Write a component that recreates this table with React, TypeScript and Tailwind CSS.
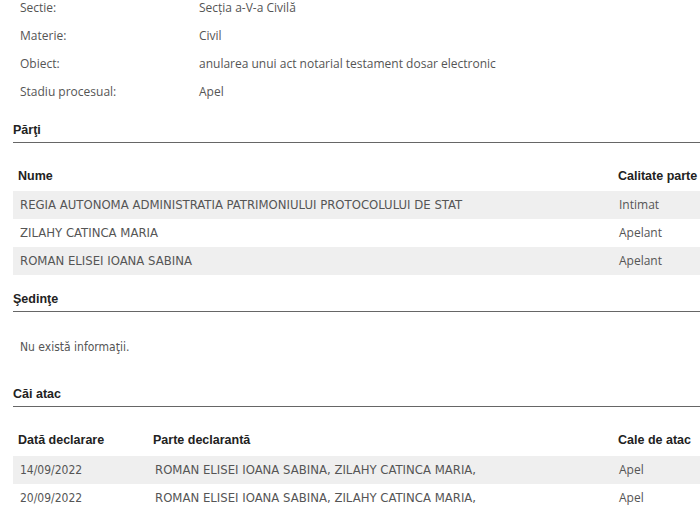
const info = [
  { label: 'Sectie:', value: 'Secția a-V-a Civilă' },
  { label: 'Materie:', value: 'Civil' },
  { label: 'Obiect:', value: 'anularea unui act notarial testament dosar electronic' },
  { label: 'Stadiu procesual:', value: 'Apel' },
];

const parti = [
  { nume: 'REGIA AUTONOMA ADMINISTRATIA PATRIMONIULUI PROTOCOLULUI DE STAT', calitate: 'Intimat' },
  { nume: 'ZILAHY CATINCA MARIA', calitate: 'Apelant' },
  { nume: 'ROMAN ELISEI IOANA SABINA', calitate: 'Apelant' },
];

const caiAtac = [
  { data: '14/09/2022', parte: 'ROMAN ELISEI IOANA SABINA, ZILAHY CATINCA MARIA,', cale: 'Apel' },
  { data: '20/09/2022', parte: 'ROMAN ELISEI IOANA SABINA, ZILAHY CATINCA MARIA,', cale: 'Apel' },
];

const tahoma = "font-['DejaVu_Sans_Condensed','Liberation_Sans',sans-serif]";
const segoe = "font-['Open_Sans','Noto_Sans',sans-serif]";
const arialBold = "font-['Liberation_Sans',Arial,sans-serif] font-bold text-[#222] text-[12.5px]";

function SectionTitle({ title }: { title: string }) {
  return <div className={`${arialBold} border-b border-[#666] pb-[3px] leading-[18px]`}>{title}</div>;
}

export default function App() {
  return (
    <div className="w-[700px] h-[513px] overflow-hidden bg-white pl-[13px]">
      <div className={`${segoe} text-[12px] text-[#555] -mt-[6px]`}>
        {info.map((row) => (
          <div key={row.label} className="flex h-[28px] items-center">
            <div className="w-[186px] pl-[7px]">{row.label}</div>
            <div>{row.value}</div>
          </div>
        ))}
      </div>

      <div className="mt-[15px]">
        <SectionTitle title="Părţi" />
      </div>
      <div className="mt-[19px]">
        <div className={`${arialBold} flex h-[29px] items-center`}>
          <div className="w-[600px] pl-[5px]">Nume</div>
          <div className="whitespace-nowrap pl-[5px]">Calitate parte</div>
        </div>
        {parti.map((p, idx) => (
          <div
            key={idx}
            className={`flex h-[28px] items-center text-[#555] ${idx % 2 === 0 ? 'bg-[#efefef]' : 'bg-white'}`}
          >
            <div className={`w-[600px] whitespace-nowrap pl-[7px] text-[13px] ${tahoma}`}>{p.nume}</div>
            <div className={`${segoe} text-[12px] pl-[6px]`}>{p.calitate}</div>
          </div>
        ))}
      </div>

      <div className="mt-[15px]">
        <SectionTitle title="Şedinţe" />
      </div>
      <div className={`${tahoma} text-[12px] leading-[18px] text-[#555] pl-[7px] mt-[26px]`}>Nu există informaţii.</div>

      <div className="mt-[29px]">
        <SectionTitle title="Căi atac" />
      </div>
      <div className="mt-[18px]">
        <div className={`${arialBold} flex h-[31px] items-center`}>
          <div className="w-[135px] pl-[5px]">Dată declarare</div>
          <div className="w-[465px] pl-[5px]">Parte declarantă</div>
          <div className="whitespace-nowrap pl-[5px]">Cale de atac</div>
        </div>
        {caiAtac.map((c, idx) => (
          <div
            key={idx}
            className={`flex h-[28px] items-center text-[#555] ${idx % 2 === 0 ? 'bg-[#efefef]' : 'bg-white'}`}
          >
            <div className={`w-[135px] pl-[7px] text-[12px] ${tahoma}`}>{c.data}</div>
            <div className={`w-[465px] whitespace-nowrap pl-[7px] text-[13px] ${tahoma}`}>{c.parte}</div>
            <div className={`${segoe} text-[12px] pl-[6px]`}>{c.cale}</div>
          </div>
        ))}
      </div>
    </div>
  );
}
